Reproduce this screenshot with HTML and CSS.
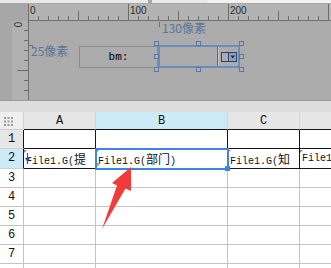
FILE: index.html
```html
<!DOCTYPE html>
<html lang="zh">
<head>
  <meta charset="UTF-8" />
  <title>报表设计</title>
  <link rel="stylesheet" href="styles.css">
</head>
<body>
  <div class="tabs">
    <span class="tab tab-1"></span>
    <span class="tab tab-2"></span>
    <span class="tab tab-3"></span>
  </div>

  <div class="designer">
    <div class="ruler-row">
      <div class="ruler-corner"></div>
      <div class="hruler">
        <span class="rnum">0</span>
        <span class="rnum">100</span>
        <span class="rnum">200</span>
      </div>
    </div>
    <div class="work-row">
      <div class="gutter"></div>
      <div class="vruler"><span class="vnum">0</span></div>
      <div class="canvas">
        <div class="dim dim-w">130像素</div>
        <div class="dim dim-h">25像素</div>
        <div class="field-label">bm:</div>
        <div class="field-sel">
          <span class="divider"></span>
          <svg class="dropdown" width="16" height="10" viewBox="0 0 16 10">
            <rect x="0.5" y="0.5" width="15" height="9" fill="#a9acb4" stroke="#2f3f66"/>
            <rect x="8" y="1" width="7" height="8" fill="#8e9fc2"/>
            <line x1="7.5" y1="0.5" x2="7.5" y2="9.5" stroke="#2f3f66"/>
            <polygon points="9.5,3.5 14,3.5 11.75,6.5" fill="#1b2850"/>
          </svg>
        </div>
        <span class="hd hx1 hy1"></span>
        <span class="hd hx2 hy1"></span>
        <span class="hd hx3 hy1"></span>
        <span class="hd hx1 hy2"></span>
        <span class="hd hx3 hy2"></span>
        <span class="hd hx1 hy3"></span>
        <span class="hd hx2 hy3"></span>
        <span class="hd hx3 hy3"></span>
      </div>
    </div>
  </div>

  <div class="sheet">
    <div class="sheet-gap"></div>

    <div class="row head">
      <div class="cell rh">
        <svg class="dots" width="9" height="9" viewBox="0 0 9 9">
          <rect x="0" y="0" width="2" height="2"/><rect x="3.5" y="0" width="2" height="2"/><rect x="7" y="0" width="2" height="2"/>
          <rect x="0" y="3.5" width="2" height="2"/><rect x="3.5" y="3.5" width="2" height="2"/><rect x="7" y="3.5" width="2" height="2"/>
          <rect x="0" y="7" width="2" height="2"/><rect x="3.5" y="7" width="2" height="2"/><rect x="7" y="7" width="2" height="2"/>
        </svg>
      </div>
      <div class="cell ca">A</div>
      <div class="cell cb on">B</div>
      <div class="cell cc">C</div>
      <div class="cell cd"></div>
    </div>

    <div class="row bk r1">
      <div class="cell rh">1</div>
      <div class="cell ca"></div>
      <div class="cell cb"></div>
      <div class="cell cc"></div>
      <div class="cell cd"></div>
    </div>

    <div class="row bk r2">
      <div class="cell rh">2</div>
      <div class="cell ca data">
        <svg class="flag" width="5" height="9" viewBox="0 0 5 9">
          <rect x="2" y="0" width="1" height="6" fill="#2348d8"/>
          <polygon points="0,5 5,5 2.5,9" fill="#2348d8"/>
        </svg>File1.G(<span class="cjk">提</span>
      </div>
      <div class="cell cb data sel">File1.G(<span class="cjk">部门</span>)<span class="note"></span><span class="fill"></span></div>
      <div class="cell cc data">File1.G(<span class="cjk">知</span></div>
      <div class="cell cd data">File1</div>
    </div>

    <div class="row"><div class="cell rh">3</div><div class="cell ca"></div><div class="cell cb"></div><div class="cell cc"></div><div class="cell cd"></div></div>
    <div class="row"><div class="cell rh">4</div><div class="cell ca"></div><div class="cell cb"></div><div class="cell cc"></div><div class="cell cd"></div></div>
    <div class="row"><div class="cell rh">5</div><div class="cell ca"></div><div class="cell cb"></div><div class="cell cc"></div><div class="cell cd"></div></div>
    <div class="row"><div class="cell rh">6</div><div class="cell ca"></div><div class="cell cb"></div><div class="cell cc"></div><div class="cell cd"></div></div>
    <div class="row"><div class="cell rh">7</div><div class="cell ca"></div><div class="cell cb"></div><div class="cell cc"></div><div class="cell cd"></div></div>
    <div class="row"><div class="cell rh"></div><div class="cell ca"></div><div class="cell cb"></div><div class="cell cc"></div><div class="cell cd"></div></div>

    <!-- red pointer arrow laid over the grid -->
    <svg class="arrow" width="331" height="168" viewBox="0 0 331 168">
      <polygon points="131,67 131,91 125.5,88.5 102,129 117,85.5 112,83" fill="#f23c3c"/>
    </svg>
  </div>
</body>
</html>
```

FILE: styles.css
```css
* { box-sizing: border-box; margin: 0; padding: 0; }

body {
  width: 331px;
  height: 268px;
  overflow: hidden;
  background: #fff;
  font-family: "Liberation Sans", sans-serif;
}

/* top tab strip */
.tabs {
  display: flex;
  height: 4px;
  background: #a7a7a7;
}

.tab {
  height: 3px;
  background: #e9e9e9;
}

.tab-1 { width: 148px; }
.tab-2 { width: 55px; margin-left: 4px; }
.tab-3 { flex: 1; background: #f2f2f2; }

/* form designer */
.designer {
  background: #acacac;
}

.ruler-row {
  display: flex;
  height: 17px;
}

.ruler-corner {
  width: 29px;
  background: #a7a7a7;
  border-right: 1px solid #6e6e6e;
}

.hruler {
  flex: 1;
  display: flex;
  background-color: #b3b3b3;
  border-bottom: 1px solid #6e6e6e;
  background-image:
    repeating-linear-gradient(to right, transparent 0 9px, #6c6c6c 9px 10px),
    repeating-linear-gradient(to right, transparent 0 49px, #6c6c6c 49px 50px),
    repeating-linear-gradient(to right, transparent 0 99px, #6c6c6c 99px 100px);
  background-size: 100% 4px, 100% 9px, 100% 100%;
  background-position: left bottom;
  background-repeat: no-repeat;
}

.rnum {
  flex: none;
  width: 100px;
  padding: 2px 0 0 1px;
  font-size: 10px;
  line-height: 10px;
  color: #2a2a2a;
}

.work-row {
  display: flex;
  height: 79px;
}

.gutter {
  width: 12px;
  background: #a7a7a7;
}

.vruler {
  width: 17px;
  background-color: #b1b1b1;
  border-right: 1px solid #6e6e6e;
  background-image:
    repeating-linear-gradient(to bottom, transparent 0 9px, #6c6c6c 9px 10px),
    repeating-linear-gradient(to bottom, transparent 0 49px, #6c6c6c 49px 50px);
  background-size: 4px 100%, 11px 100%;
  background-position: right top;
  background-repeat: no-repeat;
}

.vnum {
  display: block;
  width: 8px;
  height: 7px;
  margin: 0 0 0 1px;
  font-size: 10px;
  line-height: 7px;
  text-align: center;
  color: #2a2a2a;
  transform: rotate(90deg);
}

.canvas {
  flex: 1;
  position: relative;
  background: #acacac;
}

.dim {
  position: absolute;
  font-family: "Noto Sans CJK SC", sans-serif;
  font-size: 12px;
  line-height: 12px;
  color: #5a7497;
}

.dim::before {
  content: "";
  position: absolute;
  left: 0;
  top: 0;
}

.dim-w {
  left: 130px;
  top: 1px;
  padding-left: 3px;
}

.dim-w::before {
  width: 1px;
  height: 5px;
  background: #5a7497;
}

.dim-h {
  left: 0;
  top: 24px;
  padding-left: 2px;
}

.dim-h::before {
  width: 3px;
  height: 3px;
  border-top: 1px solid #5a7497;
  border-right: 1px solid #5a7497;
}

.field-label {
  position: absolute;
  left: 50px;
  top: 25px;
  width: 79px;
  height: 22px;
  border: 1px solid #8c8c8c;
  font: 11px/20px "Liberation Mono", monospace;
  text-align: center;
  color: #000;
}

.field-sel {
  position: absolute;
  left: 129px;
  top: 24px;
  width: 82px;
  height: 23px;
  border: 2px solid #6a8cbb;
  display: flex;
  align-items: center;
  justify-content: flex-end;
  padding-right: 1px;
}

.divider {
  align-self: stretch;
  width: 2px;
  background: #6a6a6a;
  border-right: 1px solid #c4c4c4;
  margin-right: 2px;
}

.dropdown {
  display: block;
  margin-top: 1px;
}

.hd {
  position: absolute;
  width: 5px;
  height: 5px;
  border: 1px solid #5878a2;
  background: #b0b0b0;
}

.hx1 { left: 125px; }
.hx2 { left: 167px; }
.hx3 { left: 210px; }
.hy1 { top: 20px; }
.hy2 { top: 33px; }
.hy3 { top: 46px; }

/* spreadsheet */
.sheet {
  position: relative;
  height: 168px;
  overflow: hidden;
  background: #fff;
}

.sheet-gap {
  height: 12px;
  background: #dcdcdc;
  border-top: 1px solid #9c9c9c;
}

.row {
  display: flex;
  height: 19px;
}

.row.r2 { height: 20px; }

.cell {
  flex: none;
  border-right: 1px solid #c4c4c4;
  border-bottom: 1px solid #c4c4c4;
  font: 12px/18px "Liberation Mono", monospace;
  color: #111;
  white-space: nowrap;
  overflow: hidden;
}

.rh { width: 24px; text-align: center; }
.ca { width: 72px; }
.cb { width: 132px; }
.cc { width: 72px; }
.cd { flex: 1; border-right: none; }

.head { height: 18px; }

.head .cell {
  background: #e6e6e6;
  border-right-color: #d3d3d3;
  border-bottom-color: #151515;
  line-height: 17px;
  padding-top: 1px;
  text-align: center;
}

.head .rh {
  background: #efefef;
  border-bottom-color: #cfcfcf;
  padding-top: 0;
}

.head .on { background: #cdebf7; }

.dots {
  display: block;
  margin: 5px 0 0 4px;
  fill: #9b9b9b;
}

.bk .cell {
  border-color: #151515;
}

.bk .rh {
  border-bottom-color: #cfcfcf;
}

.r1 .rh { background: #e6e6e6; }
.r2 .rh { background: #cdebf7; }

.r2 .cell { line-height: 19px; }

.data {
  position: relative;
  padding-left: 2px;
  font-size: 10px;
}

.data::before {
  content: "";
  position: absolute;
  left: 0;
  top: 1px;
  border-top: 3px solid #8a8a8a;
  border-right: 3px solid transparent;
}

.cjk {
  font-family: "Noto Sans CJK SC", sans-serif;
  font-size: 12px;
}

.flag {
  position: absolute;
  left: 1px;
  top: 4px;
}

.sel {
  overflow: visible;
}

.sel::after {
  content: "";
  position: absolute;
  left: -1px;
  top: -1px;
  right: -2px;
  bottom: -2px;
  border: 2px solid #3a86e6;
}

.note {
  position: absolute;
  left: 1px;
  top: 14px;
  width: 2px;
  height: 3px;
  background: #f0a020;
}

.fill {
  position: absolute;
  left: 129px;
  top: 17px;
  width: 5px;
  height: 5px;
  background: #3a86e6;
  z-index: 1;
}

.arrow {
  position: absolute;
  left: 0;
  top: 0;
  z-index: 2;
}
```
